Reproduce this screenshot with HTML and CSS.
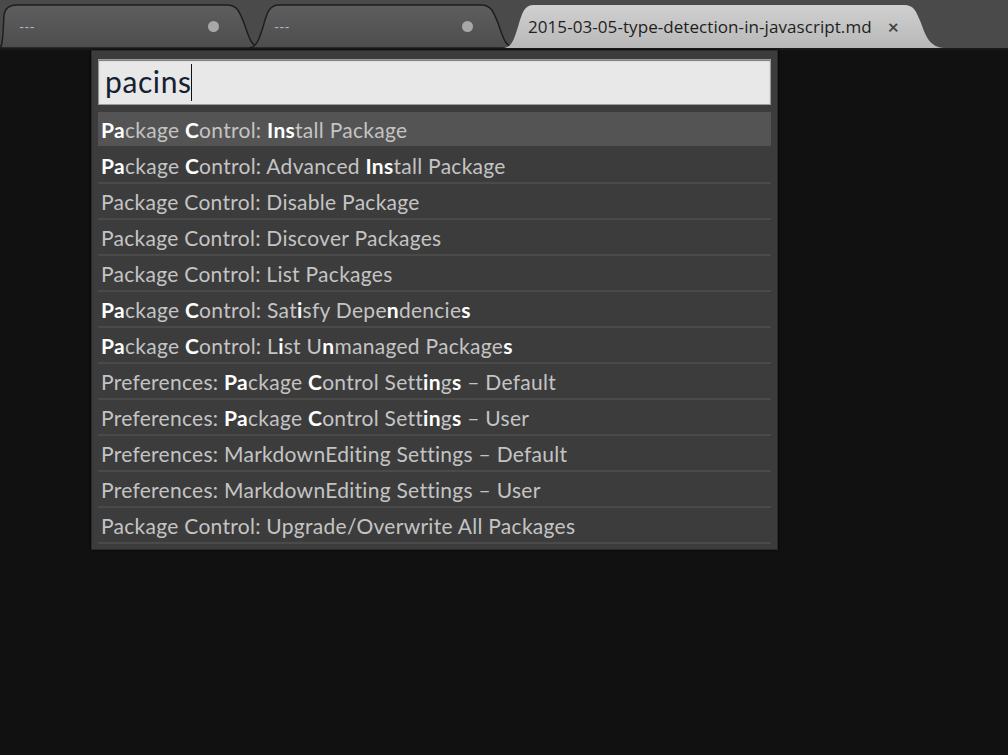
FILE: index.html
```html
<!DOCTYPE html>
<html>
<head>
<meta charset="utf-8">
<link rel="stylesheet" href="styles.css">
</head>
<body>
<div class="tabbar">
  <div class="tab tab1">
    <svg class="tabshape" width="262" height="45" viewBox="0 0 262 45"><path d="M0,45 C2,45 3,43 4,30 L5,12 C6,5 10,2 18,2 L228,2 C238,2 240,8 245,20 C250,34 252,44 262,45 Z" fill="url(#g1)" stroke="#1e1e1e" stroke-width="1.5"/><defs><linearGradient id="g1" x1="0" y1="0" x2="0" y2="1"><stop offset="0" stop-color="#5e5e5e"/><stop offset="1" stop-color="#4d4d4d"/></linearGradient></defs></svg>
    <span class="dashes">---</span>
    <span class="dot"></span>
  </div>
  <div class="tab tab2">
    <svg class="tabshape" width="266" height="45" viewBox="0 0 266 45"><path d="M0,45 C8,44 10,36 14,24 C18,10 20,2 30,2 L232,2 C242,2 244,8 249,20 C254,34 256,44 266,45 Z" fill="url(#g2)" stroke="#1e1e1e" stroke-width="1.5"/><defs><linearGradient id="g2" x1="0" y1="0" x2="0" y2="1"><stop offset="0" stop-color="#5e5e5e"/><stop offset="1" stop-color="#4d4d4d"/></linearGradient></defs></svg>
    <span class="dashes">---</span>
    <span class="dot"></span>
  </div>
  <div class="tab tab3">
    <svg class="tabshape" width="440" height="45" viewBox="0 0 440 45"><path d="M0,45 C8,44 10,36 14,24 C18,10 20,2 30,2 L400,2 C410,2 412,8 417,20 C422,34 426,44 440,45 Z" fill="url(#g3)"/><defs><linearGradient id="g3" x1="0" y1="0" x2="0" y2="1"><stop offset="0" stop-color="#d0d0d0"/><stop offset="1" stop-color="#b8b8b8"/></linearGradient></defs></svg>
    <span class="title">2015-03-05-type-detection-in-javascript.md</span>
    <span class="close">×</span>
  </div>
</div>
<div class="editor">
  <div class="palette">
    <div class="input"><span class="query">pacins</span><span class="caret"></span></div>
    <ul class="list">
      <li class="item selected"><b>Pa</b>ckage <b>C</b>ontrol: <b>Ins</b>tall Package</li>
      <li class="item"><b>Pa</b>ckage <b>C</b>ontrol: Advanced <b>Ins</b>tall Package</li>
      <li class="item">Package Control: Disable Package</li>
      <li class="item">Package Control: Discover Packages</li>
      <li class="item">Package Control: List Packages</li>
      <li class="item"><b>Pa</b>ckage <b>C</b>ontrol: Sat<b>i</b>sfy Depe<b>n</b>dencie<b>s</b></li>
      <li class="item"><b>Pa</b>ckage <b>C</b>ontrol: L<b>i</b>st U<b>n</b>managed Package<b>s</b></li>
      <li class="item">Preferences: <b>Pa</b>ckage <b>C</b>ontrol Sett<b>in</b>g<b>s</b> – Default</li>
      <li class="item">Preferences: <b>Pa</b>ckage <b>C</b>ontrol Sett<b>in</b>g<b>s</b> – User</li>
      <li class="item">Preferences: MarkdownEditing Settings – Default</li>
      <li class="item">Preferences: MarkdownEditing Settings – User</li>
      <li class="item">Package Control: Upgrade/Overwrite All Packages</li>
    </ul>
  </div>
</div>
</body>
</html>
```

FILE: styles.css
```css
* { box-sizing: border-box; }
html, body { margin: 0; padding: 0; }
body {
  width: 1008px;
  height: 755px;
  background: #111111;
  overflow: hidden;
  font-family: Lato, "Liberation Sans", sans-serif;
}
.tabbar {
  height: 50px;
  background: #4a4a4a;
  border-bottom: 2px solid #1a1a1a;
  display: flex;
  align-items: flex-end;
  padding-top: 3px;
}
.tab {
  position: relative;
  height: 45px;
  display: flex;
  align-items: center;
  flex: none;
}
.tabshape { position: absolute; left: 0; top: 0; z-index: 0; }
.tab > span { position: relative; z-index: 1; }
.tab1 { width: 262px; padding-left: 20px; margin-left: -1px; }
.tab2 { width: 266px; margin-left: -12px; padding-left: 25px; }
.tab3 { width: 440px; margin-left: -11px; padding-left: 24px; }
.dashes {
  color: #a8b8c8;
  font-size: 14px;
  margin-top: 2px;
}
.dot {
  width: 11px; height: 11px;
  border-radius: 50%;
  background: #a8a8a8;
  margin-left: auto;
  margin-right: 42px;
  margin-top: 2px;
}
.title {
  color: #1e1e1e;
  font-family: "Open Sans", "Liberation Sans", sans-serif;
  font-size: 17px;
  letter-spacing: 0.07px;
  margin-top: 2px;
}
.close {
  color: #444;
  font-size: 19px;
  font-weight: bold;
  margin-left: 16px;
  margin-top: 1px;
}
.editor {
  padding-left: 91px;
}
.palette {
  width: 687px;
  height: 500px;
  background: #3c3c3c;
  border: 1px solid #2a2a2a;
  box-shadow: 0 0 2px #000;
  padding: 8px 6px 0 6px;
}
.input {
  height: 46px;
  background: #e8e8e8;
  border: 1px solid #9a9a9a;
  box-shadow: inset 0 1px 1px #777;
  display: flex;
  align-items: center;
  padding-left: 6px;
}
.query {
  font-size: 30px;
  color: #152030;
  letter-spacing: 0.6px;
  margin-top: -2px;
}
.caret {
  width: 1.5px;
  height: 37px;
  background: #111;
  margin-left: -1px;
}
.list {
  list-style: none;
  margin: 7px 0 0 0;
  padding: 0;
}
.item {
  height: 36px;
  line-height: 35px;
  padding-left: 3px;
  color: #c4c4c4;
  font-size: 21px;
  letter-spacing: 0.28px;
  border-bottom: 2px solid #4a4a4a;
  white-space: nowrap;
}
.item b { color: #ffffff; font-weight: 700; }
.item.selected { background: #545454; border-bottom-color: #3c3c3c; }
```
